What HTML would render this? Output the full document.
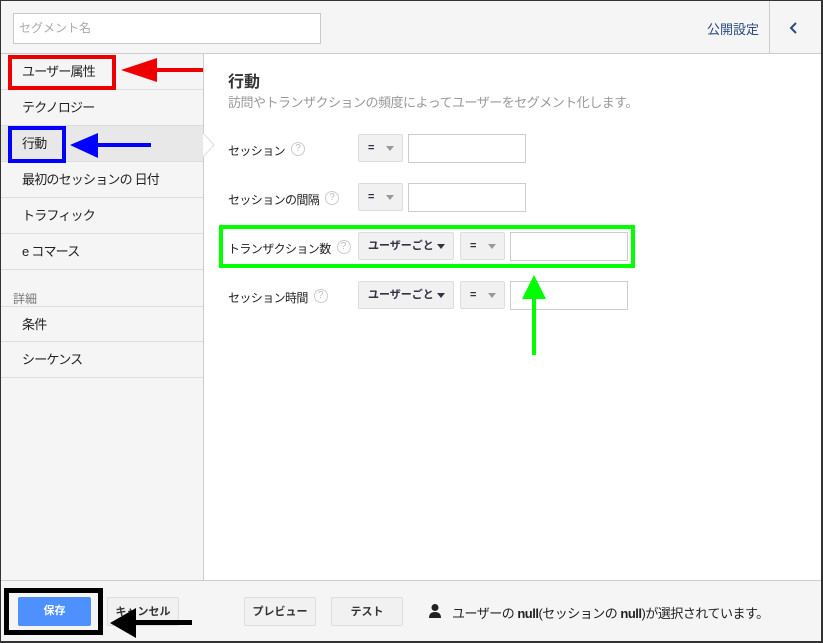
<!DOCTYPE html><html><head><meta charset="utf-8"><style>
*{box-sizing:border-box;margin:0;padding:0}
body{width:823px;height:643px;overflow:hidden;font-family:"Liberation Sans","Noto Sans CJK JP",sans-serif;font-size:13px;color:#222;background:#fff;position:relative}
.frame{position:absolute;left:0;top:0;width:823px;height:643px;border:2px solid #333;border-left-width:1px;border-top-width:1px}
.a{position:absolute}
.top{left:1px;top:1px;width:820px;height:53px;background:#f5f5f5;border-bottom:1px solid #ccc}
.side{left:1px;top:54px;width:203px;height:526px;background:#f5f5f5;border-right:1px solid #ccc}
.it{position:absolute;left:0;width:202px;height:36px;border-bottom:1px solid #ddd;padding-left:21px;line-height:36px;font-size:13px;letter-spacing:-0.8px}
.foot{left:1px;top:580px;width:820px;height:61px;background:#f5f5f5;border-top:1px solid #ccc}
.lbl{position:absolute;left:228px;font-size:12px;letter-spacing:-0.6px}
.q{display:inline-block;width:14px;height:14px;border:1px solid #ccc;border-radius:50%;color:#bbb;font-size:10px;line-height:12px;text-align:center;margin-left:6px;vertical-align:top;letter-spacing:0}
.sel{position:absolute;height:28px;background:#f1f1f1;border:1px solid #ddd;border-radius:2px;font-size:11px;font-weight:bold;color:#334;line-height:26px;padding-left:9px}
.tri{position:absolute;top:11px;width:0;height:0;border-left:4px solid transparent;border-right:4px solid transparent;border-top:5px solid #999}
.inp{position:absolute;height:29px;background:#fff;border:1px solid #ccc}
.btn{position:absolute;top:597px;height:29px;background:#f1f1f1;border:1px solid #ddd;border-radius:2px;font-size:11px;font-weight:bold;text-align:center;line-height:29px;color:#333}
</style></head><body>
<div class="a top"></div>
<div class="a" style="left:13px;top:13px;width:308px;height:31px;background:#fff;border:1px solid #c8c8c8;color:#aaa;font-size:12px;line-height:29px;padding-left:5px">セグメント名</div>
<div class="a" style="left:707px;top:19px;color:#2a4a7f;font-size:13px">公開設定</div>
<div class="a" style="left:769px;top:1px;width:1px;height:53px;background:#ccc"></div>
<svg class="a" style="left:788px;top:20px" width="12" height="16"><path d="M8 3 L3 8 L8 13" stroke="#2a4a7f" stroke-width="2" fill="none"/></svg>
<div class="a side">
<div class="it" style="top:0">ユーザー属性</div>
<div class="it" style="top:36px">テクノロジー</div>
<div class="it" style="top:72px;background:#e8e8e8">行動</div>
<div class="it" style="top:108px">最初のセッションの 日付</div>
<div class="it" style="top:144px">トラフィック</div>
<div class="it" style="top:180px">e コマース</div>
<div class="a" style="left:12px;top:236px;font-size:12px;color:#777">詳細</div>
<div class="it" style="top:252px;border-top:1px solid #ddd">条件</div>
<div class="it" style="top:288px">シーケンス</div>
</div>
<svg class="a" style="left:203px;top:133px" width="12" height="24"><path d="M0 0 L11 12 L0 24" fill="#fff" stroke="#ddd"/></svg>
<div class="a" style="left:228px;top:68px;font-size:16px;font-weight:bold;color:#333">行動</div>
<div class="a" style="left:228px;top:92px;font-size:13px;color:#999;letter-spacing:-0.5px">訪問やトランザクションの頻度によってユーザーをセグメント化します。</div>
<div class="lbl" style="top:142px">セッション<span class="q">?</span></div>
<div class="sel" style="left:358px;top:134px;width:45px">=</div><div class="tri" style="left:386px;top:146px"></div>
<div class="inp" style="left:408px;top:134px;width:118px"></div>
<div class="lbl" style="top:191px">セッションの間隔<span class="q">?</span></div>
<div class="sel" style="left:358px;top:183px;width:45px">=</div><div class="tri" style="left:386px;top:195px"></div>
<div class="inp" style="left:408px;top:183px;width:118px"></div>
<div class="lbl" style="top:240px">トランザクション数<span class="q">?</span></div>
<div class="sel" style="left:358px;top:232px;width:96px">ユーザーごと</div><div class="tri" style="left:437px;top:244px;border-top-color:#334"></div>
<div class="sel" style="left:460px;top:232px;width:45px">=</div><div class="tri" style="left:488px;top:244px"></div>
<div class="inp" style="left:510px;top:232px;width:118px"></div>
<div class="lbl" style="top:289px">セッション時間<span class="q">?</span></div>
<div class="sel" style="left:358px;top:281px;width:96px">ユーザーごと</div><div class="tri" style="left:437px;top:293px;border-top-color:#334"></div>
<div class="sel" style="left:460px;top:281px;width:45px">=</div><div class="tri" style="left:488px;top:293px"></div>
<div class="inp" style="left:510px;top:281px;width:118px"></div>
<div class="a foot"></div>
<div class="a" style="left:18px;top:597px;width:73px;height:29px;background:#4d90fe;border-radius:2px;color:#fff;font-size:11px;font-weight:bold;text-align:center;line-height:29px">保存</div>
<div class="btn" style="left:107px;width:72px">キャンセル</div>
<div class="btn" style="left:244px;width:72px">プレビュー</div>
<div class="btn" style="left:331px;width:72px">テスト</div>
<svg class="a" style="left:428px;top:603px" width="14" height="16"><circle cx="7" cy="4.5" r="3.5" fill="#222"/><path d="M1 15 Q1 9 7 9 Q13 9 13 15Z" fill="#222"/></svg>
<div class="a" style="left:452px;top:603px;font-size:13px;letter-spacing:-0.5px">ユーザーの <b>null</b>(セッションの <b>null</b>)が選択されています。</div>
<div class="a" style="left:8px;top:55px;width:108px;height:35px;border:4px solid #e00"></div>
<div class="a" style="left:155px;top:68px;width:48px;height:4px;background:#e00"></div>
<svg class="a" style="left:121px;top:58px" width="36" height="24"><path d="M0 12 L36 0 L36 24Z" fill="#e00"/></svg>
<div class="a" style="left:8px;top:126px;width:58px;height:37px;border:4px solid #00f"></div>
<div class="a" style="left:96px;top:143px;width:55px;height:4px;background:#00f"></div>
<svg class="a" style="left:70px;top:133px" width="28" height="25"><path d="M0 12 L28 0 L28 25Z" fill="#00f"/></svg>
<div class="a" style="left:219px;top:225px;width:416px;height:43px;border:4px solid #0f0"></div>
<svg class="a" style="left:520px;top:275px" width="28" height="80"><path d="M14 0 L26 24 L2 24Z" fill="#0f0"/><rect x="12" y="22" width="4" height="58" fill="#0f0"/></svg>
<div class="a" style="left:4px;top:588px;width:99px;height:47px;border:5px solid #000"></div>
<svg class="a" style="left:110px;top:608px" width="82" height="30"><path d="M0 15 L26 0 L26 30Z" fill="#000"/><rect x="24" y="12" width="58" height="5" fill="#000"/></svg>
<div class="frame"></div>
</body></html>
